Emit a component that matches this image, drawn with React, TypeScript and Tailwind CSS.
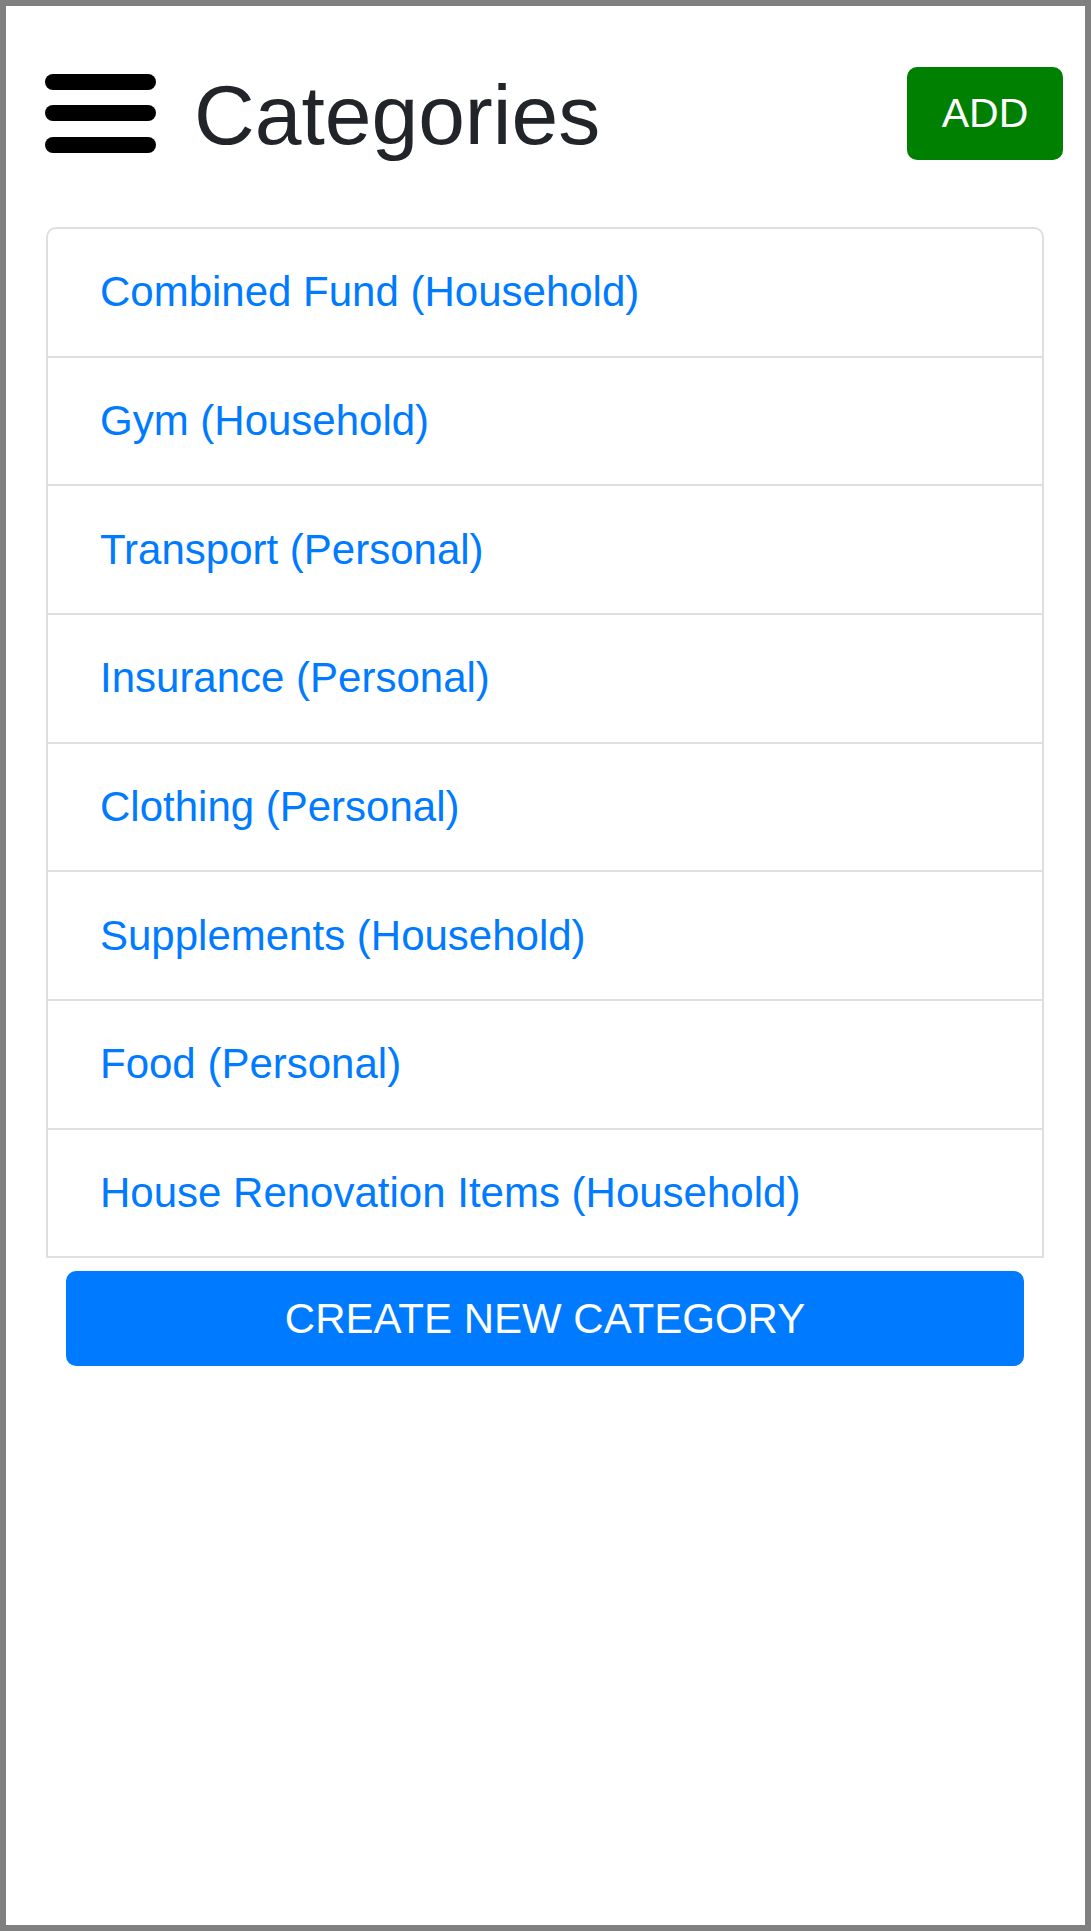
import React from "react";

const items = [
  "Combined Fund (Household)",
  "Gym (Household)",
  "Transport (Personal)",
  "Insurance (Personal)",
  "Clothing (Personal)",
  "Supplements (Household)",
  "Food (Personal)",
  "House Renovation Items (Household)",
];

export default function App() {
  return (
    <div
      className="w-[1091px] h-[1931px] border-[6px] border-[#808080] bg-white box-border"
      style={{ fontFamily: '"Liberation Sans", Arial, sans-serif' }}
    >
      <div className="flex items-center pl-[39px] pr-[22px] pt-[61px]">
        <svg width="111" height="79" viewBox="0 0 111 79" className="shrink-0">
          <rect x="0" y="0" width="111" height="16" rx="8" fill="#000" />
          <rect x="0" y="31" width="111" height="16" rx="8" fill="#000" />
          <rect x="0" y="63" width="111" height="16" rx="8" fill="#000" />
        </svg>
        <h1 className="ml-[38px] mt-[3px] text-[84px] leading-none text-[#212529] font-normal">
          Categories
        </h1>
        <button className="ml-auto w-[156px] h-[93px] rounded-[10px] bg-[#008000] text-white text-[41px] leading-none">
          ADD
        </button>
      </div>

      <div className="mx-[40px] mt-[67px] w-[998px] border-2 border-[#dfdfdf] rounded-t-[10px] divide-y-2 divide-[#dfdfdf] overflow-hidden">
        {items.map((t) => (
          <div key={t} className="h-[126.67px] flex items-center pl-[52px] box-content">
            <span className="text-[42px] leading-none text-[#007bff]">{t}</span>
          </div>
        ))}
      </div>

      <div className="mx-[60px] mt-[13px]">
        <button className="w-[958px] h-[95px] rounded-[10px] bg-[#007bff] text-white text-[42px] leading-none flex items-center justify-center">
          CREATE NEW CATEGORY
        </button>
      </div>
    </div>
  );
}
